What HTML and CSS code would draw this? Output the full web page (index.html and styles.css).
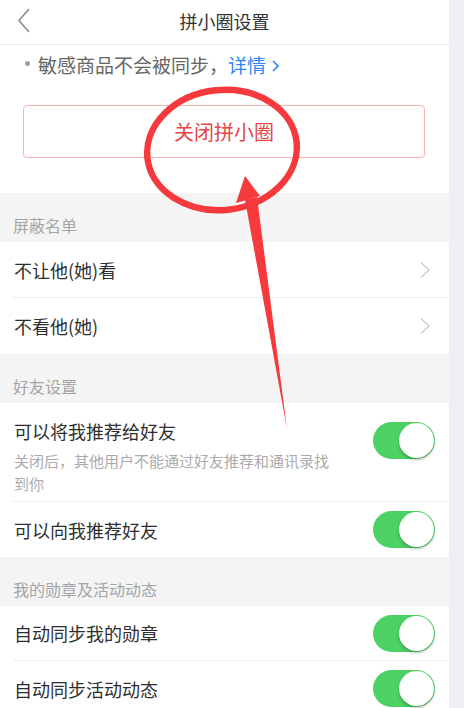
FILE: index.html
```html
<!DOCTYPE html>
<html lang="zh-CN">
<head>
<meta charset="utf-8">
<title>拼小圈设置</title>
<link rel="stylesheet" href="styles.css">
</head>
<body>
<div class="page">
  <header class="topbar">
    <svg class="back" width="20" height="30" viewBox="0 0 20 30"><polyline points="12,3 2,14.5 12,26" fill="none" stroke="#8a8a8a" stroke-width="1.6"/></svg>
    <h1 class="title">拼小圈设置</h1>
  </header>

  <section class="intro">
    <p class="notice"><span class="dot"></span>敏感商品不会被同步，<span class="link">详情<svg class="link-arrow" width="9" height="14" viewBox="0 0 9 14"><polyline points="2,2 7,7 2,12" fill="none" stroke="#2f86f6" stroke-width="1.7"/></svg></span></p>
    <button class="close-btn">关闭拼小圈</button>
  </section>

  <div class="group-title">屏蔽名单</div>
  <ul class="group">
    <li class="row nav-row"><span class="row-text">不让他(她)看</span><svg class="chev" width="12" height="18" viewBox="0 0 12 18"><polyline points="2,1.5 10,9 2,16.5" fill="none" stroke="#cfcfcf" stroke-width="1.5"/></svg></li>
    <li class="row nav-row"><span class="row-text">不看他(她)</span><svg class="chev" width="12" height="18" viewBox="0 0 12 18"><polyline points="2,1.5 10,9 2,16.5" fill="none" stroke="#cfcfcf" stroke-width="1.5"/></svg></li>
  </ul>

  <div class="group-title">好友设置</div>
  <ul class="group">
    <li class="row toggle-row tall">
      <div class="row-body">
        <span class="row-text">可以将我推荐给好友</span>
        <span class="row-sub">关闭后，其他用户不能通过好友推荐和通讯录找到你</span>
      </div>
      <span class="switch"><span class="knob"></span></span>
    </li>
    <li class="row toggle-row"><span class="row-text">可以向我推荐好友</span><span class="switch"><span class="knob"></span></span></li>
  </ul>

  <div class="group-title">我的勋章及活动动态</div>
  <ul class="group">
    <li class="row toggle-row"><span class="row-text">自动同步我的勋章</span><span class="switch"><span class="knob"></span></span></li>
    <li class="row toggle-row"><span class="row-text">自动同步活动动态</span><span class="switch"><span class="knob"></span></span></li>
  </ul>
</div>

<svg class="annotation" width="464" height="708" viewBox="0 0 464 708">
  <ellipse cx="222" cy="150" rx="75" ry="60" transform="rotate(-6 222 150)" fill="none" stroke="#f5393c" stroke-width="6.5"/>
  <polygon points="245,176 236,203 260,196" fill="#f5393c"/>
  <polygon points="245,200 257,197 287,429" fill="#f5393c"/>
</svg>
</body>
</html>
```

FILE: styles.css
```css
* { box-sizing: border-box; }
html, body { margin: 0; padding: 0; }
body {
  width: 464px;
  height: 708px;
  overflow: hidden;
  background: #eeeff3;
  font-family: "Noto Sans CJK SC", "Noto Sans", sans-serif;
  color: #333;
  position: relative;
}
.page {
  width: 449px;
  min-height: 708px;
  background: #f4f4f4;
}
.topbar {
  height: 45px;
  background: #fff;
  border-bottom: 1px solid #ececec;
  display: flex;
  align-items: center;
  justify-content: center;
  position: relative;
}
.back { position: absolute; left: 17px; top: 6px; }
.title {
  margin: 0;
  font-size: 18px;
  font-weight: 400;
  color: #333;
  line-height: 24px;
  margin-top: -2px;
}
.intro {
  background: #fff;
  padding: 7px 24px 35px 23px;
}
.notice {
  margin: 0;
  font-size: 19px;
  line-height: 26px;
  color: #666;
  display: flex;
  align-items: center;
}
.dot {
  width: 5px;
  height: 5px;
  border-radius: 50%;
  background: #a0a0a0;
  margin: -3px 8px 0 2px;
}
.link { color: #2f86f6; display: inline-flex; align-items: center; gap: 5px; }
.link-arrow { margin-top: 1px; }
.close-btn {
  display: block;
  width: 100%;
  height: 53px;
  margin-top: 27px;
  background: #fff;
  border: 1px solid #f6b4b4;
  border-radius: 4px;
  color: #e5474a;
  font-family: inherit;
  font-size: 20px;
  padding: 0;
}
.group-title {
  height: 49px;
  display: flex;
  align-items: flex-end;
  padding: 0 0 7px 13px;
  font-size: 16px;
  line-height: 20px;
  color: #a5a5a5;
}
.group {
  list-style: none;
  margin: 0;
  padding: 0 0 0 13px;
  background: #fff;
}
.row {
  display: flex;
  align-items: center;
  padding-left: 1px;
  border-bottom: 1px solid #efefef;
  font-size: 18px;
  line-height: 24px;
  color: #2e2e2e;
}
.row:last-child { border-bottom: none; }
.nav-row { height: 56px; padding-right: 18px; }
.nav-row .chev { margin-left: auto; }
.toggle-row { height: 55px; padding-right: 14px; justify-content: space-between; }
.tall { height: 99px; align-items: flex-start; padding-top: 16px; }
.tall .switch { margin-top: 3px; }
.row-body { display: flex; flex-direction: column; }
.row-sub {
  margin-top: 6px;
  width: 322px;
  font-size: 15px;
  line-height: 23px;
  color: #aaa;
}
.switch {
  flex: none;
  width: 62px;
  height: 37px;
  border-radius: 19px;
  background: #4cd263;
  display: flex;
  align-items: center;
  justify-content: flex-end;
  padding-right: 1px;
}
.knob {
  width: 35px;
  height: 35px;
  border-radius: 50%;
  background: #fff;
  box-shadow: 0 2px 3px rgba(0,0,0,0.25);
}
.annotation { position: absolute; left: 0; top: 0; pointer-events: none; }
```
